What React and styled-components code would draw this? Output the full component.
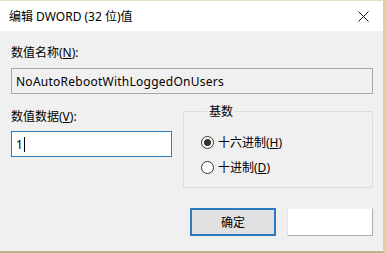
import styled, { createGlobalStyle } from 'styled-components'

const Global = createGlobalStyle`
  html, body { margin: 0; padding: 0; background: #f0f0f0; }
  body { font-family: "Noto Sans", "Noto Sans CJK SC", sans-serif; font-size: 12px; color: #000; }
`;

const Window = styled.div`
  width: 385px;
  height: 253px;
  box-sizing: border-box;
  border-top: 1px solid #e9e2bd;
  border-right: 2px solid #dcd29e;
  border-bottom: 2px solid #bab58b;
  background: #f0f0f0;
  display: flex;
  flex-direction: column;
`;

const TitleBar = styled.div`
  height: 30px;
  background: #fff;
  display: flex;
  align-items: center;
  justify-content: space-between;
  padding: 0 14px 0 9px;
  font-size: 12px;
`;

const Close = styled.svg`
  width: 11px;
  height: 11px;
`;

const Body = styled.div`
  padding: 14px 10px 0 11px;
  display: flex;
  flex-direction: column;
`;

const Label = styled.div`
  height: 16px;
  line-height: 16px;
  margin-bottom: ${p => p.$gap || 7}px;
`;

const Key = styled.span`
  text-decoration: underline;
`;

const TextBox = styled.div`
  box-sizing: border-box;
  height: 26px;
  width: ${p => p.$width || '100%'};
  border: 1px solid ${p => (p.$active ? '#2f7fbf' : '#a8a8a8')};
  background: ${p => (p.$active ? '#fff' : '#f0f0f0')};
  padding: 0 4px;
  display: flex;
  align-items: center;
  font-size: 12px;
  letter-spacing: ${p => (p.$active ? 0 : 0.25)}px;
`;

const Caret = styled.span`
  display: inline-block;
  width: 1px;
  height: 15px;
  background: #000;
  margin-left: 1px;
`;

const Row = styled.div`
  display: flex;
  justify-content: space-between;
  margin-top: 15px;
`;

const Column = styled.div`
  display: flex;
  flex-direction: column;
`;

const GroupBox = styled.fieldset`
  box-sizing: border-box;
  width: 190px;
  height: 86px;
  margin: -7px 0 0 0;
  padding: 14px 0 0 17px;
  border: 1px solid #dcdcdc;
  border-radius: 2px;
  display: flex;
  flex-direction: column;
  gap: 9px;
`;

const Legend = styled.legend`
  padding: 0 2px;
  margin-left: 6px;
  font-size: 12px;
`;

const Radio = styled.label`
  display: flex;
  align-items: center;
  gap: 4px;
  height: 16px;
`;

const Dot = styled.span`
  box-sizing: border-box;
  width: 13px;
  height: 13px;
  border-radius: 50%;
  border: 1px solid #333;
  background: #fff;
  display: flex;
  align-items: center;
  justify-content: center;
  &::after {
    content: '';
    width: 7px;
    height: 7px;
    border-radius: 50%;
    background: ${p => (p.$on ? '#333' : 'transparent')};
  }
`;

const Buttons = styled.div`
  display: flex;
  justify-content: flex-end;
  gap: 11px;
  margin-top: 20px;
`;

const Button = styled.div`
  box-sizing: border-box;
  width: 86px;
  height: 28px;
  display: flex;
  align-items: center;
  justify-content: center;
  background: ${p => (p.$primary ? '#e1e1e1' : '#fff')};
  border: ${p => (p.$primary ? '2px solid #2f79c0' : '1px solid #adadad')};
  border-top-color: ${p => (p.$primary ? '#2f79c0' : '#f4f4f4')};
  border-left-color: ${p => (p.$primary ? '#2f79c0' : '#e4e4e4')};
`;

export default function App() {
  return (
    <>
      <Global />
      <Window>
        <TitleBar>
          <span>编辑 DWORD (32 位)值</span>
          <Close viewBox="0 0 11 11">
            <path d="M0.5 0.5 L10.5 10.5 M10.5 0.5 L0.5 10.5" stroke="#111" strokeWidth="1" fill="none" />
          </Close>
        </TitleBar>
        <Body>
          <Label $gap={7}>数值名称(<Key>N</Key>):</Label>
          <TextBox>NoAutoRebootWithLoggedOnUsers</TextBox>
          <Row>
            <Column>
              <Label $gap={6}>数值数据(<Key>V</Key>):</Label>
              <TextBox $active $width="161px">1<Caret /></TextBox>
            </Column>
            <GroupBox>
              <Legend>基数</Legend>
              <Radio><Dot $on /><span>十六进制(<Key>H</Key>)</span></Radio>
              <Radio><Dot /><span>十进制(<Key>D</Key>)</span></Radio>
            </GroupBox>
          </Row>
          <Buttons>
            <Button $primary>确定</Button>
            <Button />
          </Buttons>
        </Body>
      </Window>
    </>
  )
}
